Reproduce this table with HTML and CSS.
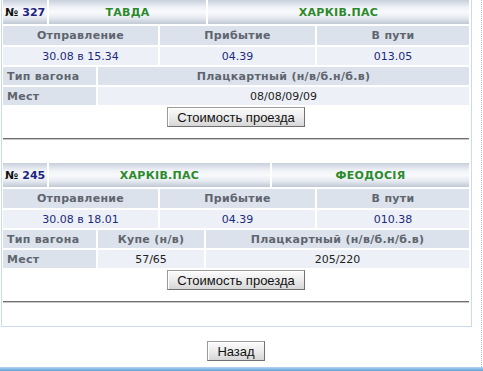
FILE: index.html
```html
<!DOCTYPE html>
<html lang="ru">
  <head>
    <meta charset="UTF-8" />
    <title>Поезда</title>
    <link rel="stylesheet" href="styles.css">
  </head>
  <body>
    <div class="frame">
      <div class="panel">

        <div class="train">
          <div class="row route route-327">
            <div class="cell num">№ <b>327</b></div>
            <div class="cell station">ТАВДА</div>
            <div class="cell station">ХАРКІВ.ПАС</div>
          </div>
          <div class="row times">
            <div class="cell label">Отправление</div>
            <div class="cell label">Прибытие</div>
            <div class="cell label">В пути</div>
            <div class="cell value">30.08 в 15.34</div>
            <div class="cell value">04.39</div>
            <div class="cell value">013.05</div>
          </div>
          <div class="row cars cars-1">
            <div class="cell label left">Тип вагона</div>
            <div class="cell label">Плацкартный (н/в/б.н/б.в)</div>
            <div class="cell label left">Мест</div>
            <div class="cell seats">08/08/09/09</div>
          </div>
          <div class="actions"><button class="btn">Стоимость проезда</button></div>
          <hr class="sep">
        </div>

        <div class="train">
          <div class="row route route-245">
            <div class="cell num">№ <b>245</b></div>
            <div class="cell station">ХАРКІВ.ПАС</div>
            <div class="cell station">ФЕОДОСІЯ</div>
          </div>
          <div class="row times">
            <div class="cell label">Отправление</div>
            <div class="cell label">Прибытие</div>
            <div class="cell label">В пути</div>
            <div class="cell value">30.08 в 18.01</div>
            <div class="cell value">04.39</div>
            <div class="cell value">010.38</div>
          </div>
          <div class="row cars cars-2">
            <div class="cell label left">Тип вагона</div>
            <div class="cell label">Купе (н/в)</div>
            <div class="cell label">Плацкартный (н/в/б.н/б.в)</div>
            <div class="cell label left">Мест</div>
            <div class="cell seats">57/65</div>
            <div class="cell seats">205/220</div>
          </div>
          <div class="actions"><button class="btn">Стоимость проезда</button></div>
          <hr class="sep">
        </div>

      </div>
      <div class="back"><button class="btn">Назад</button></div>
    </div>
    <div class="taskbar"></div>
  </body>
</html>
```

FILE: styles.css
```css
html,
body {
  margin: 0;
  padding: 0;
  background: #ffffff;
  overflow: hidden;
}

body {
  font-family: "DejaVu Sans", Verdana, sans-serif;
  font-size: 11px;
  color: #1c2a7e;
}

.frame {
  width: 481px;
  height: 367px;
  border-right: 1px dotted #a9bdd3;
  overflow: hidden;
}

.panel {
  margin: -3px 0 0 1px;
  width: 466px;
  padding: 3px 2px 0 1px;
  border: 1px solid #c9dcef;
  border-top: 0;
}

.train {
  display: flex;
  flex-direction: column;
  gap: 2px;
}

.row {
  display: grid;
  column-gap: 2px;
  row-gap: 2px;
}

.cell {
  display: flex;
  align-items: center;
  justify-content: center;
  height: 18px;
  white-space: nowrap;
}

/* train number and stations */
.route .cell {
  height: 24px;
  background: linear-gradient(#c8d0dc, #eef1f6 30%, #f9fafc 50%, #e6eaf0 75%, #c0c8d5);
}

.route-327 {
  grid-template-columns: 44px 157px 261px;
}

.route-245 {
  grid-template-columns: 44px 221px 197px;
}

.num {
  justify-content: flex-start !important;
  padding-left: 2px;
  font-weight: bold;
  color: #111111;
}

.num b {
  margin-left: 4px;
  color: #1c2383;
}

.station {
  font-weight: bold;
  color: #2c8a2c;
  letter-spacing: 0.3px;
}

.times {
  grid-template-columns: 155px 155px 152px;
}

.times .label {
  height: 19px;
}

.cars-1 {
  grid-template-columns: 93px 371px;
}

.cars-2 {
  grid-template-columns: 93px 106px 263px;
}

.label {
  background: #dbe2ec;
  color: #5f656e;
  font-weight: bold;
  letter-spacing: 0.3px;
}

.label.left {
  justify-content: flex-start;
  padding-left: 4px;
}

.value,
.seats {
  background: #edf1f7;
}

.seats {
  color: #222222;
}

.actions {
  display: flex;
  justify-content: center;
}

.btn {
  font-family: "Liberation Sans", Arial, sans-serif;
  font-size: 13px;
  color: #111111;
  height: 20px;
  padding: 0 9px;
  border: 1px solid #9a9a9a;
  border-right-color: #707070;
  border-bottom-color: #707070;
  border-radius: 0;
  background: linear-gradient(#fbfbfb, #ececec 50%, #d6d6d6);
  box-shadow: inset 1px 1px 0 #ffffff;
}

.sep {
  margin: 9px 0 23px;
  height: 0;
  border: 0;
  border-top: 1px solid #6e6e6e;
  border-bottom: 1px solid #c9c9c9;
}

.back {
  display: flex;
  justify-content: center;
  width: 472px;
  margin-top: 14px;
}

.taskbar {
  height: 4px;
  background: linear-gradient(#b6d6f0, #5d9fd8);
}
```
